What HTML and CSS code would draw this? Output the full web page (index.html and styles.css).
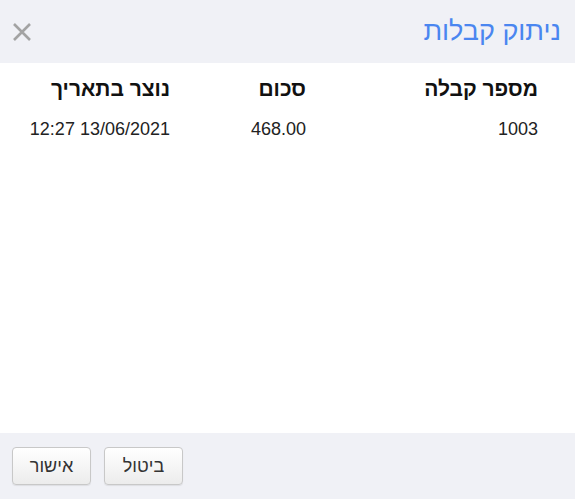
FILE: index.html
```html
<!DOCTYPE html>
<html lang="he" dir="rtl">
<head>
<meta charset="utf-8">
<link rel="stylesheet" href="styles.css">
</head>
<body>
<div class="dialog">
  <header class="dlg-header">
    <h1 class="dlg-title">ניתוק קבלות</h1>
    <button class="close-btn" aria-label="סגור">
      <svg width="20" height="20" viewBox="0 0 20 20"><path d="M2 2 L18 18 M18 2 L2 18" stroke="#a3a3a3" stroke-width="2.6" fill="none"/></svg>
    </button>
  </header>
  <main class="dlg-body">
    <div class="grid">
      <div class="th">מספר קבלה</div>
      <div class="th">סכום</div>
      <div class="th">נוצר בתאריך</div>
      <div class="td">1003</div>
      <div class="td">468.00</div>
      <div class="td">13/06/2021 12:27</div>
    </div>
  </main>
  <footer class="dlg-footer">
    <button class="btn">אישור</button>
    <button class="btn">ביטול</button>
  </footer>
</div>
</body>
</html>
```
FILE: styles.css
```css
html, body {
  margin: 0;
  padding: 0;
  height: 100%;
  background: #ffffff;
  font-family: "Liberation Sans", Arial, sans-serif;
}
.dialog {
  display: flex;
  flex-direction: column;
  height: 499px;
}
.dlg-header {
  height: 63px;
  background: #f0f1f6;
  display: flex;
  align-items: center;
  justify-content: space-between;
  padding: 0 14px 0 12px;
  box-sizing: border-box;
}
.dlg-title {
  margin: 0;
  font-weight: normal;
  font-size: 27px;
  color: #4a86f0;
}
.close-btn {
  border: 0;
  background: transparent;
  padding: 0;
  width: 20px;
  height: 20px;
  display: flex;
}
.dlg-body {
  flex: 1;
}
.grid {
  display: grid;
  grid-template-columns: 232px 136px 1fr;
  padding: 14px 37px 0 0;
  row-gap: 18px;
}
.th {
  font-weight: bold;
  font-size: 21px;
  color: #111;
}
.td {
  font-size: 18px;
  color: #222;
}
.dlg-footer {
  height: 66px;
  background: #f0f1f6;
  display: flex;
  direction: ltr;
  align-items: center;
  gap: 13px;
  padding: 0 12px;
  box-sizing: border-box;
}
.btn {
  font-family: "Liberation Sans", Arial, sans-serif;
  font-size: 18px;
  color: #333;
  width: 79px;
  height: 38px;
  border: 1px solid #c8c8c8;
  border-radius: 4px;
  background: linear-gradient(#ffffff, #ececec);
  box-shadow: 0 1px 1px rgba(0,0,0,0.08);
  direction: rtl;
  padding: 0;
}
```
